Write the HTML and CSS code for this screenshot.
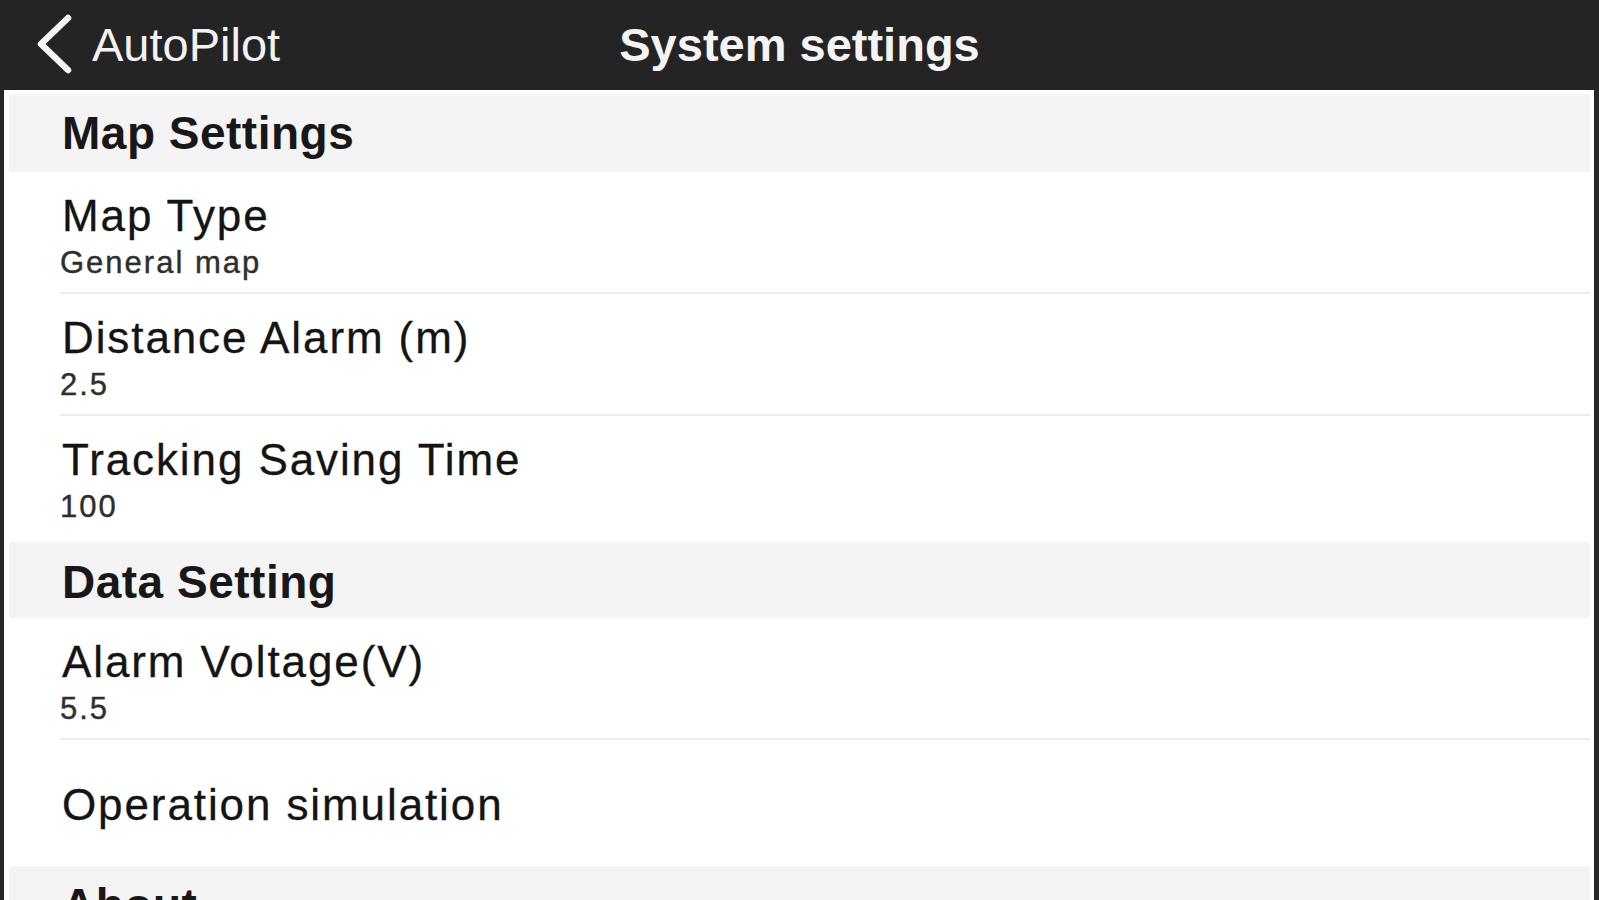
FILE: index.html
```html
<!DOCTYPE html>
<html lang="en">
<head>
<meta charset="utf-8">
<title>System settings</title>
<link rel="stylesheet" href="styles.css">
</head>
<body>
<div class="screen">
  <header class="topbar">
    <div class="back">
      <svg class="chevron" viewBox="0 0 44 62" width="44" height="62" aria-hidden="true">
        <path d="M34 5 L7 31 L34 57" fill="none" stroke="#f4f4f4" stroke-width="6.5" stroke-linecap="round" stroke-linejoin="round"/>
      </svg>
      <span class="back-label">AutoPilot</span>
    </div>
    <h1 class="title">System settings</h1>
    <div class="spacer"></div>
  </header>
  <main class="content">
    <div class="band">Map Settings</div>
    <div class="item">
      <div class="item-title">Map Type</div>
      <div class="item-sub">General map</div>
    </div>
    <div class="item">
      <div class="item-title">Distance Alarm (m)</div>
      <div class="item-sub">2.5</div>
    </div>
    <div class="item tall last">
      <div class="item-title">Tracking Saving Time</div>
      <div class="item-sub">100</div>
    </div>
    <div class="band short">Data Setting</div>
    <div class="item">
      <div class="item-title">Alarm Voltage(V)</div>
      <div class="item-sub">5.5</div>
    </div>
    <div class="item single last">
      <div class="item-title">Operation simulation</div>
    </div>
    <div class="band">About</div>
  </main>
</div>
</body>
</html>
```
FILE: styles.css
```css
html, body {
  margin: 0;
  padding: 0;
}

body {
  background: #262626;
  font-family: "Liberation Sans", Arial, Helvetica, sans-serif;
  color: #141414;
}

.screen {
  width: 1599px;
  height: 900px;
  display: flex;
  flex-direction: column;
  overflow: hidden;
}

.topbar {
  flex: 0 0 90px;
  height: 90px;
  box-sizing: border-box;
  background: #242424;
  display: grid;
  grid-template-columns: 1fr auto 1fr;
  align-items: center;
  padding-bottom: 1px;
}

.back {
  display: flex;
  align-items: center;
  padding-left: 34px;
}

.chevron {
  display: block;
  margin-top: -1px;
}

.back-label {
  margin-left: 14px;
  font-size: 47px;
  color: #f2f2f2;
}

.title {
  margin: 0;
  font-size: 47px;
  font-weight: bold;
  color: #f4f4f4;
}

.content {
  flex: 1;
  background: #ffffff;
  margin: 0 5px 0 4px;
  padding-top: 4px;
  overflow: hidden;
}

.band {
  height: 78px;
  margin: 0 4px 0 5px;
  padding-left: 53px;
  background: #f4f4f4;
  font-size: 46px;
  font-weight: bold;
  line-height: 78px;
  letter-spacing: 0.5px;
  color: #181818;
}

.band.short {
  height: 76px;
  line-height: 80px;
}

.item {
  height: 122px;
  box-sizing: border-box;
  margin: 0 4px 0 56px;
  padding: 22px 0 0 2px;
  border-bottom: 2px solid #ececec;
}

.item.tall {
  height: 126px;
}

.item.last {
  border-bottom: none;
}

.item.single {
  height: 126px;
  padding-top: 43px;
}

.item-title {
  font-size: 44px;
  line-height: 44px;
  letter-spacing: 1.9px;
  color: #141414;
  -webkit-text-stroke: 0.3px #141414;
}

.item-sub {
  margin-top: 7px;
  margin-left: -2px;
  font-size: 31px;
  line-height: 36px;
  letter-spacing: 2px;
  color: #2e2e2e;
  -webkit-text-stroke: 0.4px #2e2e2e;
}
```
